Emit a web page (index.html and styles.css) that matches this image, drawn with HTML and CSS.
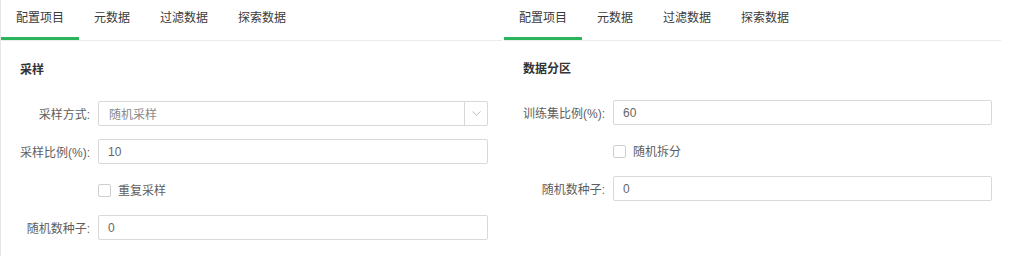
FILE: index.html
```html
<!DOCTYPE html>
<html lang="zh-CN">
  <head>
    <meta charset="utf-8"/>
    <title>采样 / 数据分区</title>
    <link rel="stylesheet" href="styles.css">
  </head>
  <body>
    <main class="panels">
      <section class="panel panel--left">
        <nav class="panel__tabs">
          <span class="panel__tab panel__tab--active">配置项目</span>
          <span class="panel__tab">元数据</span>
          <span class="panel__tab">过滤数据</span>
          <span class="panel__tab">探索数据</span>
        </nav>
        <div class="panel__body">
          <h2 class="panel__title">采样</h2>
          <div class="form_row">
            <label class="form_row__label">采样方式:</label>
            <div class="form_select">
              <span class="form_select__value">随机采样</span>
              <span class="form_select__arrow">
                <svg width="9" height="5" viewBox="0 0 9 5"><path d="M0.5 0.5 L4.5 4.2 L8.5 0.5" fill="none" stroke="#bdbdbd" stroke-width="1"/></svg>
              </span>
            </div>
          </div>
          <div class="form_row">
            <label class="form_row__label">采样比例(%):</label>
            <input class="form_input" type="text" value="10">
          </div>
          <div class="form_row">
            <span class="form_row__label"></span>
            <label class="form_check"><span class="form_check__box"></span>重复采样</label>
          </div>
          <div class="form_row">
            <label class="form_row__label">随机数种子:</label>
            <input class="form_input" type="text" value="0">
          </div>
        </div>
      </section>

      <section class="panel panel--right">
        <nav class="panel__tabs">
          <span class="panel__tab panel__tab--active">配置项目</span>
          <span class="panel__tab">元数据</span>
          <span class="panel__tab">过滤数据</span>
          <span class="panel__tab">探索数据</span>
        </nav>
        <div class="panel__body">
          <h2 class="panel__title">数据分区</h2>
          <div class="form_row">
            <label class="form_row__label">训练集比例(%):</label>
            <input class="form_input" type="text" value="60">
          </div>
          <div class="form_row">
            <span class="form_row__label"></span>
            <label class="form_check"><span class="form_check__box"></span>随机拆分</label>
          </div>
          <div class="form_row">
            <label class="form_row__label">随机数种子:</label>
            <input class="form_input" type="text" value="0">
          </div>
        </div>
      </section>
    </main>
  </body>
</html>
```

FILE: styles.css
```css
body {
  margin: 0;
  padding: 0;
  background: #FFF;
  font-family: 'Liberation Sans', 'Noto Sans CJK SC', sans-serif;
  font-size: 12px;
  color: #333;
}

.panels {
  display: flex;
  width: 1001px;
  height: 256px;
}

.panel {
  border-left: 1px solid #e6e6e6;
}

.panel--left {
  width: 501px;
}

.panel--right {
  width: 497px;
  margin-left: 1px;
  border-left-color: #FFF;
}

.panel__tabs {
  display: flex;
  height: 40px;
  border-bottom: 1px solid #ebebeb;
}

.panel__tab {
  padding: 0 15px;
  line-height: 37px;
  border-bottom: 3px solid transparent;
  color: #3a3a3a;
  white-space: nowrap;
}

.panel__tab--active {
  border-bottom-color: #2bb55a;
}

.panel__body {
  padding: 19px 0 0 19px;
}

.panel--left .panel__body {
  padding-right: 14px;
}

.panel--right .panel__body {
  padding-right: 9px;
}

.panel__title {
  margin: 0 0 21px;
  font-size: 12px;
  font-weight: 700;
  line-height: 20px;
  color: #333;
}

.panel--right .panel__title {
  margin-top: -1px;
}

.form_row {
  display: flex;
  align-items: center;
  height: 25px;
  margin-bottom: 13px;
}

.form_row__label {
  flex: none;
  width: 70px;
  padding-right: 8px;
  text-align: right;
  color: #5e5e5e;
  white-space: nowrap;
}

.panel--right .form_row__label {
  width: 82px;
}

.form_input,
.form_select {
  flex: 1;
  box-sizing: border-box;
  height: 25px;
  margin: 0;
  padding: 0 9px;
  border: 1px solid #d9d9d9;
  border-radius: 2px;
  font: inherit;
  color: #666;
  outline: none;
}

.form_select {
  display: flex;
  align-items: center;
  padding-right: 0;
}

.form_select__value {
  flex: 1;
  padding-left: 1px;
  color: #888;
}

.form_select__arrow {
  display: flex;
  align-items: center;
  justify-content: center;
  width: 22px;
  height: 100%;
  border-left: 1px solid #d9d9d9;
}

.form_check {
  display: flex;
  align-items: center;
  color: #5e5e5e;
}

.form_check__box {
  box-sizing: border-box;
  width: 13px;
  height: 13px;
  margin: 1px 7px 0 0;
  border: 1px solid #cfcfcf;
  border-radius: 2px;
}
```
